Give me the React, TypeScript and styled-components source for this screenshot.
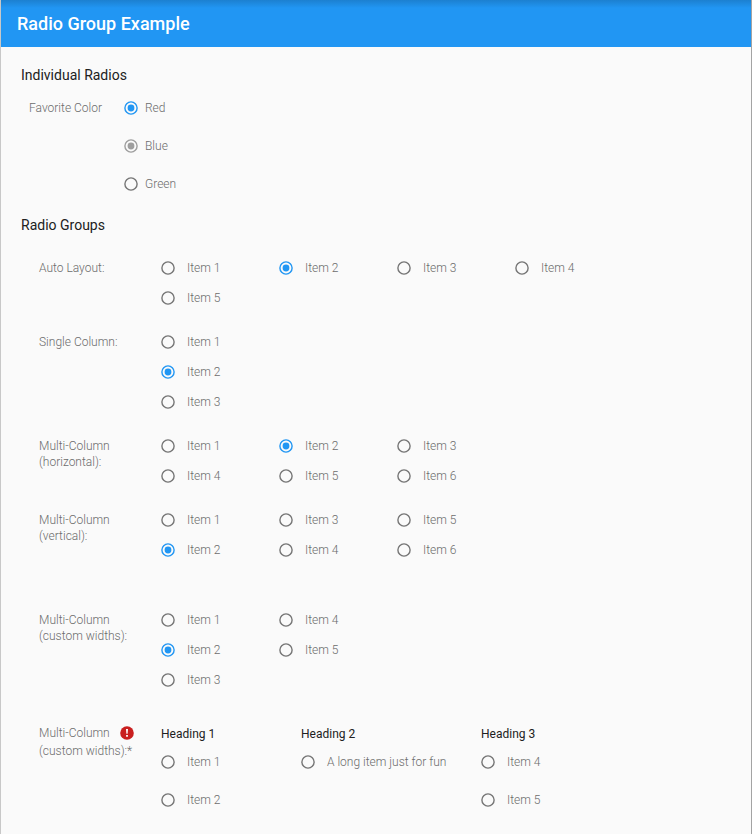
import React, { useId, useState } from "react";
import styled, { createGlobalStyle } from "styled-components";

const GlobalStyle = createGlobalStyle`
  * { box-sizing: border-box; }
  body {
    margin: 0;
    background: #fafafa;
    color: #212121;
    font-family: Roboto, "Liberation Sans", sans-serif;
    font-size: 12px;
  }
`;

const Page = styled.div`
  min-height: 100vh;
  padding-bottom: 15px;
  border-left: 1px solid #c8c8c8;
  border-right: 1px solid #a4a4a4;
`;

const Header = styled.header`
  display: flex;
  align-items: center;
  height: 47px;
  padding: 0 16px;
  background: linear-gradient(#1c80d0, #2196f3 8px);
  color: #fff;
`;

const Title = styled.h1`
  margin: 0;
  font-size: 18px;
  font-weight: 500;
  line-height: 20px;
`;

const Main = styled.main`
  display: flex;
  flex-direction: column;
  gap: 8px;
  padding: 14px 20px 0;
`;

const SectionTitle = styled.h2`
  margin: 0;
  font-size: 14px;
  font-weight: 400;
  line-height: 28px;
`;

const SoloField = styled.div`
  display: grid;
  grid-template-columns: 95px 1fr;
  padding-left: 8px;
`;

const Groups = styled.div`
  display: flex;
  flex-direction: column;
  gap: 14px;
  padding: 14px 0 0 18px;
`;

const GroupField = styled.div<{ $before?: number }>`
  display: grid;
  grid-template-columns: 122px 1fr;
  margin-top: ${(p) => p.$before ?? 0}px;
`;

const Caption = styled.div<{ $top?: number }>`
  padding-top: ${(p) => p.$top ?? 7}px;
  color: #6c6c6c;
  font-weight: 300;
  line-height: 16px;
  white-space: pre-line;
`;

const CaptionLine = styled.div`
  display: flex;
  align-items: center;
  justify-content: space-between;
  height: 20px;
  padding-right: 27px;
`;

const OptionGrid = styled.div<{ $columns: string; $rows?: number }>`
  display: grid;
  grid-template-columns: ${(p) => p.$columns};
  grid-template-rows: ${(p) => (p.$rows ? `repeat(${p.$rows}, auto)` : "none")};
  grid-auto-flow: ${(p) => (p.$rows ? "column" : "row")};
  justify-content: start;
  align-content: start;
`;

const Column = styled.div`
  display: flex;
  flex-direction: column;
`;

const ColumnHeading = styled.h3`
  margin: 0;
  padding-top: 2px;
  font-size: 12px;
  font-weight: 400;
  line-height: 18px;
`;

const OptionLabel = styled.label<{ $height: number; $gap: number }>`
  position: relative;
  display: flex;
  align-items: center;
  gap: ${(p) => p.$gap}px;
  height: ${(p) => p.$height}px;
  color: #6c6c6c;
  font-weight: 300;
  line-height: 16px;
  white-space: nowrap;
`;

const RadioInput = styled.input`
  position: absolute;
  left: 0;
  width: 14px;
  height: 14px;
  margin: 0;
  opacity: 0;
`;

const RadioMark = styled.svg<{ $on: boolean; $disabled?: boolean }>`
  flex: none;
  width: 14px;
  height: 14px;
  color: ${(p) => (p.$disabled ? "#9e9e9e" : p.$on ? "#2196f3" : "#757575")};
`;

const ErrorIcon = styled.svg`
  width: 14px;
  height: 14px;
`;

type OptionProps = {
  name: string;
  text: string;
  checked: boolean;
  onSelect: () => void;
  disabled?: boolean;
  height?: number;
  gap?: number;
};

function Option({ name, text, checked, onSelect, disabled, height = 30, gap = 12 }: OptionProps) {
  return (
    <OptionLabel $height={height} $gap={gap}>
      <RadioInput type="radio" name={name} checked={checked} disabled={disabled} onChange={onSelect} />
      <RadioMark $on={checked} $disabled={disabled} viewBox="0 0 14 14" aria-hidden="true">
        <circle cx="7" cy="7" r="6.1" fill="none" stroke="currentColor" strokeWidth="1.4" />
        {checked && <circle cx="7" cy="7" r="3.4" fill="currentColor" />}
      </RadioMark>
      {text}
    </OptionLabel>
  );
}

type GroupProps = {
  caption: string;
  count: number;
  columns: string;
  rows?: number;
  initial?: number;
  before?: number;
};

function RadioGroup({ caption, count, columns, rows, initial, before }: GroupProps) {
  const id = useId();
  const [value, setValue] = useState(initial);
  return (
    <GroupField role="radiogroup" aria-labelledby={id} $before={before}>
      <Caption id={id}>{caption}</Caption>
      <OptionGrid $columns={columns} $rows={rows}>
        {Array.from({ length: count }, (_, i) => i + 1).map((n) => (
          <Option key={n} name={`${id}-item`} text={`Item ${n}`} checked={value === n} onSelect={() => setValue(n)} />
        ))}
      </OptionGrid>
    </GroupField>
  );
}

const headedColumns = [
  { heading: "Heading 1", items: ["Item 1", "Item 2"] },
  { heading: "Heading 2", items: ["A long item just for fun"] },
  { heading: "Heading 3", items: ["Item 4", "Item 5"] },
];

function HeadedGroup() {
  const id = useId();
  const [value, setValue] = useState<string>();
  return (
    <GroupField role="radiogroup" aria-labelledby={id} aria-required="true" aria-invalid="true" $before={14}>
      <Caption id={id} $top={0}>
        <CaptionLine>
          Multi-Column
          <ErrorIcon viewBox="0 0 14 14" aria-hidden="true">
            <circle cx="7" cy="7" r="6.8" fill="#c91f1f" />
            <path d="M6 3h2l-.4 4.8H6.4zM6.1 9h1.8v1.7H6.1z" fill="#fff" />
          </ErrorIcon>
        </CaptionLine>
        (custom widths):*
      </Caption>
      <OptionGrid $columns="140px 180px auto">
        {headedColumns.map((column) => (
          <Column key={column.heading}>
            <ColumnHeading>{column.heading}</ColumnHeading>
            {column.items.map((item) => (
              <Option
                key={item}
                name={`${id}-item`}
                text={item}
                height={38}
                checked={value === item}
                onSelect={() => setValue(item)}
              />
            ))}
          </Column>
        ))}
      </OptionGrid>
    </GroupField>
  );
}

function FavoriteColor() {
  const id = useId();
  const [color, setColor] = useState("Red");
  return (
    <SoloField role="group" aria-labelledby={id}>
      <Caption id={id} $top={11}>Favorite Color</Caption>
      <Column>
        <Option name="color" text="Red" height={38} gap={7} checked={color === "Red"} onSelect={() => setColor("Red")} />
        <Option name="color-fixed" text="Blue" height={38} gap={7} checked disabled onSelect={() => undefined} />
        <Option name="color" text="Green" height={38} gap={7} checked={color === "Green"} onSelect={() => setColor("Green")} />
      </Column>
    </SoloField>
  );
}

export default function App() {
  return (
    <>
      <GlobalStyle />
      <Page>
        <Header>
          <Title>Radio Group Example</Title>
        </Header>
        <Main>
          <section>
            <SectionTitle>Individual Radios</SectionTitle>
            <FavoriteColor />
          </section>
          <section>
            <SectionTitle>Radio Groups</SectionTitle>
            <Groups>
              <RadioGroup caption="Auto Layout:" count={5} initial={2} columns="repeat(4, 118px)" />
              <RadioGroup caption="Single Column:" count={3} initial={2} columns="118px" />
              <RadioGroup caption={"Multi-Column\n(horizontal):"} count={6} initial={2} columns="repeat(3, 118px)" />
              <RadioGroup caption={"Multi-Column\n(vertical):"} count={6} initial={2} columns="repeat(3, 118px)" rows={2} />
              <RadioGroup
                caption={"Multi-Column\n(custom widths):"}
                count={5}
                initial={2}
                columns="repeat(2, 118px)"
                rows={3}
                before={26}
              />
              <HeadedGroup />
            </Groups>
          </section>
        </Main>
      </Page>
    </>
  );
}
